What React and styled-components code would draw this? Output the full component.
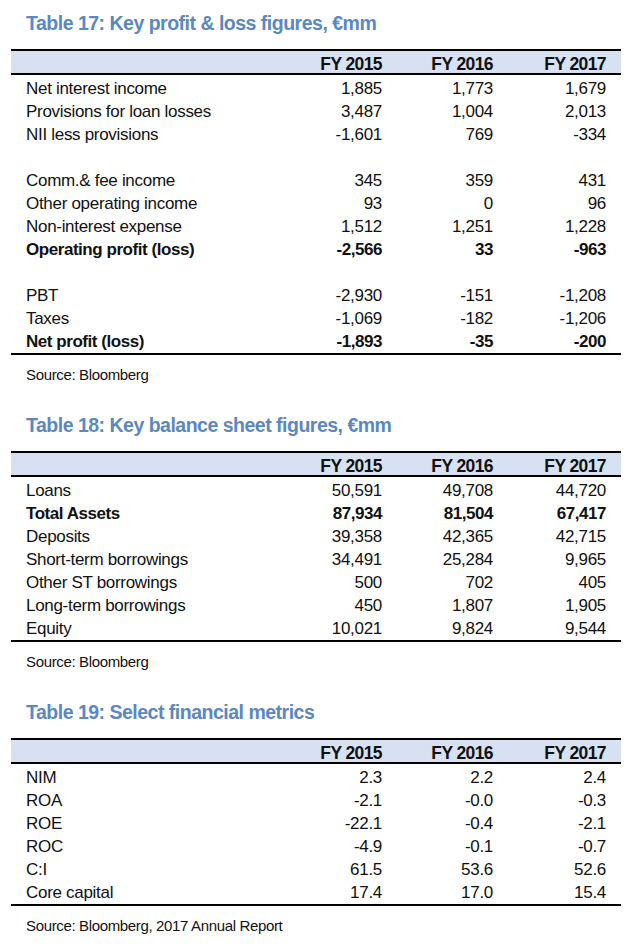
import React from "react";
import styled, { createGlobalStyle } from "styled-components";

const Global = createGlobalStyle`
  html, body { margin: 0; padding: 0; background: #fff; }
  body { font-family: "Liberation Sans", Arial, sans-serif; color: #111; }
`;

const Page = styled.div`
  width: 610px;
  padding: 11px 0 0 11px;
`;

const Section = styled.section`
  margin-bottom: 28px;
`;

const Title = styled.h2`
  margin: 0 0 14px 0;
  padding-left: 15px;
  height: 24px;
  font-size: 19.5px;
  line-height: 24px;
  font-weight: 700;
  letter-spacing: -0.5px;
  color: #5a88bf;
  white-space: nowrap;
`;

const Table = styled.div`
  border-top: 2px solid #000;
  border-bottom: 2px solid #000;
  padding-bottom: 2px;
`;

const cols = "272px 114px 111px 113px";

const HeadRow = styled.div`
  display: grid;
  grid-template-columns: ${cols};
  box-sizing: border-box;
  height: 24px;
  padding-top: 3px;
  background: #d7e1f1;
  border-bottom: 2px solid #000;
  font-weight: 700;
  font-size: 17.5px;
  line-height: 20px;
  letter-spacing: -0.6px;
`;

const Row = styled.div`
  display: grid;
  grid-template-columns: ${cols};
  box-sizing: border-box;
  height: 23px;
  padding-top: 4px;
  font-size: 17px;
  line-height: 19px;
  letter-spacing: ${(p) => (p.$bold ? "-0.45px" : "-0.3px")};
  font-weight: ${(p) => (p.$bold ? 700 : 400)};
`;

const Label = styled.div`
  padding-left: 15px;
  white-space: nowrap;
`;

const Num = styled.div`
  text-align: right;
  padding-right: 15px;
  white-space: nowrap;
`;

const Source = styled.div`
  margin-top: 10px;
  padding-left: 15px;
  font-size: 15px;
  line-height: 20px;
  letter-spacing: -0.35px;
`;

const years = ["FY 2015", "FY 2016", "FY 2017"];

const tables = [
  {
    title: "Table 17: Key profit & loss figures, €mm",
    source: "Source: Bloomberg",
    rows: [
      ["Net interest income", "1,885", "1,773", "1,679"],
      ["Provisions for loan losses", "3,487", "1,004", "2,013"],
      ["NII less provisions", "-1,601", "769", "-334"],
      null,
      ["Comm.& fee income", "345", "359", "431"],
      ["Other operating income", "93", "0", "96"],
      ["Non-interest expense", "1,512", "1,251", "1,228"],
      ["Operating profit (loss)", "-2,566", "33", "-963", true],
      null,
      ["PBT", "-2,930", "-151", "-1,208"],
      ["Taxes", "-1,069", "-182", "-1,206"],
      ["Net profit (loss)", "-1,893", "-35", "-200", true],
    ],
  },
  {
    title: "Table 18: Key balance sheet figures, €mm",
    source: "Source: Bloomberg",
    rows: [
      ["Loans", "50,591", "49,708", "44,720"],
      ["Total Assets", "87,934", "81,504", "67,417", true],
      ["Deposits", "39,358", "42,365", "42,715"],
      ["Short-term borrowings", "34,491", "25,284", "9,965"],
      ["Other ST borrowings", "500", "702", "405"],
      ["Long-term borrowings", "450", "1,807", "1,905"],
      ["Equity", "10,021", "9,824", "9,544"],
    ],
  },
  {
    title: "Table 19: Select financial metrics",
    source: "Source: Bloomberg, 2017 Annual Report",
    rows: [
      ["NIM", "2.3", "2.2", "2.4"],
      ["ROA", "-2.1", "-0.0", "-0.3"],
      ["ROE", "-22.1", "-0.4", "-2.1"],
      ["ROC", "-4.9", "-0.1", "-0.7"],
      ["C:I", "61.5", "53.6", "52.6"],
      ["Core capital", "17.4", "17.0", "15.4"],
    ],
  },
];

export default function App() {
  return (
    <Page>
      <Global />
      {tables.map((t) => (
        <Section key={t.title}>
          <Title>{t.title}</Title>
          <Table>
            <HeadRow>
              <Label />
              {years.map((y) => (
                <Num key={y}>{y}</Num>
              ))}
            </HeadRow>
            {t.rows.map((r, i) =>
              r ? (
                <Row key={i} $bold={r[4]}>
                  <Label>{r[0]}</Label>
                  <Num>{r[1]}</Num>
                  <Num>{r[2]}</Num>
                  <Num>{r[3]}</Num>
                </Row>
              ) : (
                <Row key={i} />
              )
            )}
          </Table>
          <Source>{t.source}</Source>
        </Section>
      ))}
    </Page>
  );
}
